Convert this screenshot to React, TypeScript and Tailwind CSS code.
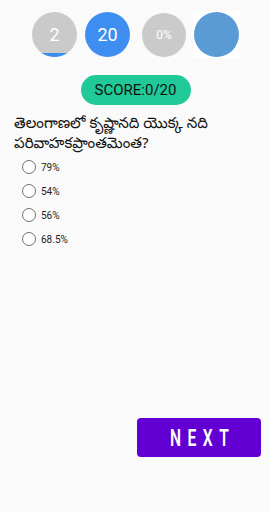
import React from 'react';

const options = ['79%', '54%', '56%', '68.5%'];

export default function App() {
  return (
    <div className="w-[270px] h-[512px] bg-[#fafafa] flex flex-col" style={{ fontFamily: 'Roboto, "Noto Sans", sans-serif' }}>
      {/* top stats */}
      <div className="flex items-center pt-[11px] pl-[32px]">
        <div className="relative w-[45px] h-[45px] rounded-full bg-[#cacaca] overflow-hidden flex items-center justify-center">
          <span className="text-white text-[18px] leading-none">2</span>
          <div className="absolute bottom-0 left-0 right-0 h-[4px] bg-[#3b8eef]" />
        </div>
        <div className="w-[45px] h-[45px] rounded-full bg-[#3d8ef0] flex items-center justify-center ml-[8px]">
          <span className="text-white text-[18px] leading-none">20</span>
        </div>
        <div className="w-[44px] h-[44px] rounded-full bg-[#cacaca] flex items-center justify-center ml-[12px]">
          <span className="text-white text-[12px] leading-none">0%</span>
        </div>
        <div className="w-[47px] h-[47px] bg-white flex items-center justify-center ml-[7px]">
          <div className="w-[45px] h-[45px] rounded-full bg-[#5b9bd5]" />
        </div>
      </div>

      {/* score */}
      <div className="flex justify-center mt-[17px] pl-[1px]">
        <div className="w-[110px] h-[30px] rounded-full bg-[#20c997] flex items-center justify-center text-[15px] text-[#111]">
          SCORE:0/20
        </div>
      </div>

      {/* question */}
      <p className="mt-[7px] px-[14px] text-[15px] leading-[20px] text-[#111]" style={{ fontFamily: '"Noto Sans", "Noto Sans Telugu", sans-serif' }}>
        తెలంగాణలో కృష్ణానది యొక్క నది పరివాహకప్రాంతమెంత?
      </p>

      {/* options */}
      <div className="flex flex-col mt-[8px] pl-[22px] gap-[10px]">
        {options.map((o) => (
          <label key={o} className="flex items-center gap-[5px] h-[14px]">
            <span className="w-[14px] h-[14px] rounded-full border-[1.5px] border-[#707070] bg-white" />
            <span className="text-[10px] text-[#222]">{o}</span>
          </label>
        ))}
      </div>

      <div className="flex-1" />

      {/* next */}
      <div className="flex justify-end pr-[9px] pb-[55px]">
        <button className="w-[124px] h-[39px] rounded-[4px] bg-[#6200d4] flex items-center justify-center">
          <span className="inline-block text-white text-[24px] leading-none font-semibold tracking-[0.42em] scale-x-[0.65] pl-[10px]">
            NEXT
          </span>
        </button>
      </div>
    </div>
  );
}
